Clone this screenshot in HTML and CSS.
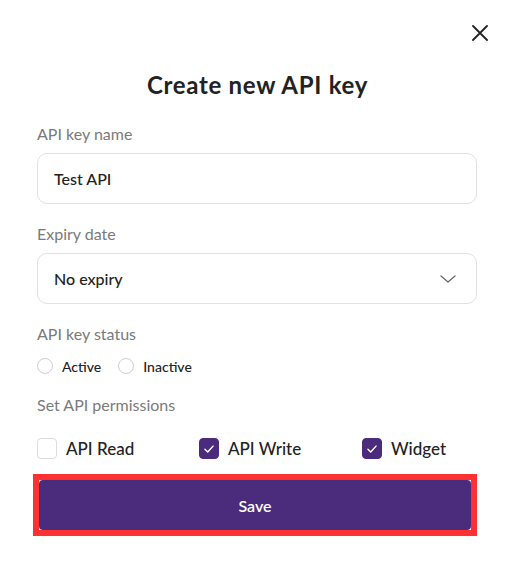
FILE: index.html
```html
<!DOCTYPE html>
<html lang="en">
<head>
<meta charset="utf-8">
<title>Create new API key</title>
<link rel="stylesheet" href="styles.css">
</head>
<body>
<div class="modal">
  <div class="modal-top">
    <button class="close" type="button" aria-label="Close">
      <svg width="16" height="16" viewBox="0 0 16 16"><path d="M1 1L15 15M15 1L1 15" stroke="#222" stroke-width="1.8" stroke-linecap="round" fill="none"/></svg>
    </button>
  </div>
  <h1 class="title">Create new API key</h1>
  <form class="form">
    <div class="field">
      <label class="label">API key name</label>
      <div class="control">Test API</div>
    </div>
    <div class="field field-gap">
      <label class="label">Expiry date</label>
      <div class="control">
        <span>No expiry</span>
        <svg class="chevron" width="16" height="8" viewBox="0 0 16 8"><path d="M1 1L8 7L15 1" stroke="#6a6a6a" stroke-width="1.3" fill="none" stroke-linecap="round" stroke-linejoin="round"/></svg>
      </div>
    </div>
    <div class="field field-gap">
      <label class="label">API key status</label>
      <div class="radios">
        <span class="radio-item"><span class="radio"></span>Active</span>
        <span class="radio-item"><span class="radio"></span>Inactive</span>
      </div>
    </div>
    <div class="field field-gap-perm">
      <label class="label">Set API permissions</label>
      <div class="checks">
        <span class="check-item"><span class="box"></span>API Read</span>
        <span class="check-item"><span class="box checked"><svg width="20" height="20" viewBox="0 0 20 20"><path d="M5.5 10.2L8.6 13.3L14.5 6.8" stroke="#fff" stroke-width="1.6" fill="none" stroke-linecap="round" stroke-linejoin="round"/></svg></span>API Write</span>
        <span class="check-item"><span class="box checked"><svg width="20" height="20" viewBox="0 0 20 20"><path d="M5.5 10.2L8.6 13.3L14.5 6.8" stroke="#fff" stroke-width="1.6" fill="none" stroke-linecap="round" stroke-linejoin="round"/></svg></span>Widget</span>
      </div>
    </div>
    <div class="save-wrap">
      <button class="save" type="button">Save</button>
    </div>
  </form>
</div>
</body>
</html>
```

FILE: styles.css
```css
body {
  margin: 0;
  background: #fff;
  font-family: "Lato", "Open Sans", sans-serif;
  color: #222;
}
.modal {
  width: 515px;
}
.modal-top {
  display: flex;
  justify-content: flex-end;
  padding: 25px 27px 0 0;
}
.close {
  display: block;
  width: 16px;
  height: 16px;
  padding: 0;
  border: 0;
  background: none;
}
.close svg {
  display: block;
}
.title {
  margin: 29px 0 0;
  text-align: center;
  font-size: 24px;
  line-height: 30px;
  font-weight: 700;
  letter-spacing: 0.7px;
  color: #222;
}
.form {
  display: flex;
  flex-direction: column;
  padding: 24px 38px 0 37px;
}
.field {
  display: flex;
  flex-direction: column;
}
.field-gap {
  margin-top: 20px;
}
.field-gap-perm {
  margin-top: 21px;
}
.label {
  font-size: 16px;
  line-height: 20px;
  color: #7a7a7a;
}
.control {
  margin-top: 9px;
  height: 51px;
  box-sizing: border-box;
  border: 1px solid #e2e2e2;
  border-radius: 10px;
  padding: 0 20px 0 16px;
  display: flex;
  align-items: center;
  justify-content: space-between;
  font-size: 16px;
  font-weight: 500;
  color: #222;
}
.chevron {
  display: block;
}
.radios {
  margin-top: 14px;
  display: flex;
  gap: 17px;
  height: 16px;
}
.radio-item {
  display: inline-flex;
  align-items: center;
  gap: 9px;
  font-size: 14px;
  font-weight: 500;
  color: #222;
}
.radio {
  width: 16px;
  height: 16px;
  box-sizing: border-box;
  border: 1px solid #cfcfcf;
  border-radius: 50%;
}
.checks {
  margin-top: 23px;
  display: grid;
  grid-template-columns: 162px 163px 1fr;
  height: 21px;
}
.check-item {
  display: flex;
  align-items: center;
  gap: 9px;
  font-size: 17px;
  font-weight: 500;
  color: #222;
}
.box {
  width: 20px;
  height: 21px;
  box-sizing: border-box;
  border: 1px solid #dcdcdc;
  border-radius: 4px;
  flex: none;
}
.box.checked {
  background: #4b2b7b;
  border-color: #4b2b7b;
  display: flex;
  align-items: center;
  justify-content: center;
}
.box svg {
  display: block;
}
.save-wrap {
  margin-top: 15px;
  margin-left: -4px;
  border: 6px solid #fe3131;
  background: #fff;
}
.save {
  display: block;
  width: 100%;
  height: 50px;
  border: 0;
  border-radius: 4px;
  background: #4b2b7b;
  color: #fff;
  font-family: inherit;
  font-size: 16px;
  font-weight: 600;
}
```
